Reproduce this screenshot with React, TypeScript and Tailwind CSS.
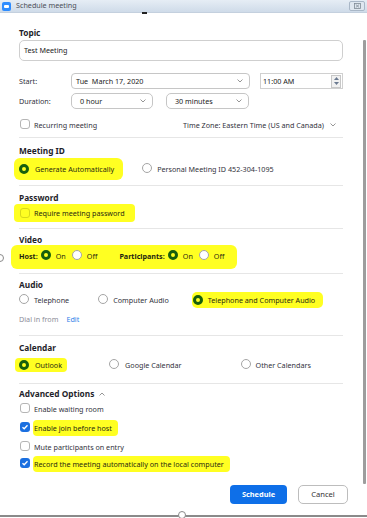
import React from "react";

const Radio = ({ on }: { on?: boolean }) =>
  on ? (
    <span className="inline-block w-[10px] h-[10px] rounded-full border-[3px] border-[#175f0d] shrink-0" />
  ) : (
    <span className="inline-block w-[10px] h-[10px] rounded-full border border-[#a5a5a5] bg-white shrink-0" />
  );

const Check = ({ on }: { on?: boolean }) =>
  on ? (
    <span className="inline-flex items-center justify-center w-[10px] h-[10px] rounded-[3px] bg-[#1a6fe0] shrink-0">
      <svg width="8" height="8" viewBox="0 0 8 8">
        <path d="M1.5 4.2 L3.2 5.8 L6.5 2.2" fill="none" stroke="white" strokeWidth="1.3" />
      </svg>
    </span>
  ) : (
    <span className="inline-block w-[10px] h-[10px] rounded-[3px] border border-[#b5b5b5] bg-white shrink-0" />
  );

const Chevron = ({ up }: { up?: boolean }) => (
  <svg width="6" height="4" viewBox="0 0 6 4" className="shrink-0">
    <path d={up ? "M0.5 3.5 L3 1 L5.5 3.5" : "M0.5 0.5 L3 3 L5.5 0.5"} fill="none" stroke="#8a8a8a" strokeWidth="0.9" />
  </svg>
);

const Label = ({ children }: { children: React.ReactNode }) => (
  <div className="h-[12px] leading-[12px] text-[8.3px] font-bold text-[#1f1f2b]">{children}</div>
);

const Divider = ({ mt }: { mt: string }) => <div className={`${mt} h-px w-[324px] bg-[#e6e6e6]`} />;

export default function App() {
  return (
    <div className="relative w-[367px] h-[518px] bg-white overflow-hidden font-[family-name:'Noto_Sans',sans-serif] text-[#32323c]">
      {/* title bar */}
      <div className="h-[13px] flex items-center bg-gradient-to-b from-[#e6edf5] to-[#cfdbe9] border-b border-[#c4d0de]">
        <span className="ml-[2px] w-[9px] h-[9px] rounded-[2px] bg-[#2d8cff] flex items-center justify-center">
          <span className="w-[5px] h-[3px] bg-white rounded-[1px]" />
        </span>
        <span className="ml-[5px] text-[7.2px] text-[#4b4f57] leading-none">Schedule meeting</span>
        <span className="ml-auto mr-[2px] w-[16px] h-[10px] rounded-[2px] border border-[#a9b7c7] bg-[#dfe7f0] flex items-center justify-center">
          <svg width="7" height="6" viewBox="0 0 7 6">
            <rect x="0.5" y="0.5" width="6" height="5" fill="none" stroke="#7f8a96" strokeWidth="0.8" />
            <path d="M1.8 1.5 L5.2 4.5 M5.2 1.5 L1.8 4.5" stroke="#7f8a96" strokeWidth="0.8" />
          </svg>
        </span>
      </div>
      {/* stray dash */}
      <div className="absolute left-[142px] top-[12px] w-[5px] h-[2px] bg-[#222]" />
      {/* scrollbar */}
      <div className="absolute left-[363px] top-[40px] w-[3px] h-[444px] bg-[#9d9d9d] rounded-[1px]" />
      {/* bottom frame */}
      <div className="absolute left-0 top-[515px] w-[367px] h-[2px] bg-[#8a8a8a]" />
      <div className="absolute left-[178px] top-[511px] w-[8px] h-[8px] rounded-full border border-[#8a8a8a] bg-white" />
      <div className="absolute left-[-4px] top-[254px] w-[8px] h-[8px] rounded-full border border-[#8a8a8a] bg-white" />

      <div className="pl-[19px]">
        <div className="mt-[14px]">
          <Label>Topic</Label>
        </div>
        <div className="mt-px w-[324px] h-[21px] rounded-[5px] border border-[#cfcfcf] flex items-center pl-[4px] text-[7.2px] text-[#222]">
          Test Meeting
        </div>

        {/* Start */}
        <div className="mt-[12px] h-[16px] flex items-center text-[7.2px]">
          <span className="w-[52px]">Start:</span>
          <div className="w-[179px] h-[16px] rounded-[4px] border border-[#c6c6c6] flex items-center pl-[4px] pr-[6px] text-[#222]">
            <span>Tue&nbsp; March 17, 2020</span>
            <span className="ml-auto">
              <Chevron />
            </span>
          </div>
          <div className="ml-[10px] w-[83px] h-[16px] border border-[#d0d0d0] flex items-center pl-[2px] text-[#222]">
            <span>11:00 AM</span>
            <span className="ml-auto mr-px w-[10px] h-[13px] border border-[#c7c7c7] bg-[#f1f1f1] flex flex-col items-center justify-center gap-[2px]">
              <svg width="5" height="3" viewBox="0 0 5 3"><path d="M0 3 L2.5 0 L5 3Z" fill="#6b7a90" /></svg>
              <svg width="5" height="3" viewBox="0 0 5 3"><path d="M0 0 L2.5 3 L5 0Z" fill="#6b7a90" /></svg>
            </span>
          </div>
        </div>

        {/* Duration */}
        <div className="mt-[4px] h-[16px] flex items-center text-[7.2px]">
          <span className="w-[52px]">Duration:</span>
          <div className="w-[82px] h-[16px] rounded-[5px] border border-[#c6c6c6] flex items-center pl-[8px] pr-[6px] text-[#222]">
            <span>0 hour</span>
            <span className="ml-auto"><Chevron /></span>
          </div>
          <div className="ml-[13px] w-[83px] h-[16px] rounded-[5px] border border-[#c6c6c6] flex items-center pl-[8px] pr-[6px] text-[#222]">
            <span>30 minutes</span>
            <span className="ml-auto"><Chevron /></span>
          </div>
        </div>

        {/* Recurring */}
        <div className="mt-[11px] h-[10px] flex items-center text-[7.2px] w-[324px]">
          <span className="ml-px"><Check /></span>
          <span className="ml-[4px]">Recurring meeting</span>
          <span className="ml-[86px]">Time Zone: Eastern Time (US and Canada)</span>
          <span className="ml-[6px]"><Chevron /></span>
        </div>

        <Divider mt="mt-[7px]" />

        {/* Meeting ID */}
        <div className="mt-[7px]"><Label>Meeting ID</Label></div>
        <div className="mt-[6px] h-[12px] flex items-center text-[7.2px]">
          <span className="flex items-center bg-[#ffff22] rounded-[6px] pl-[5px] pr-[9px] py-[6px] -ml-[5px] -mr-[9px] -my-[6px]">
            <Radio on />
            <span className="ml-[6px] text-[#2a2a10]">Generate Automatically</span>
          </span>
          <span className="ml-[28px]"><Radio /></span>
          <span className="ml-[5px]">Personal Meeting ID 452-304-1095</span>
        </div>

        <Divider mt="mt-[10px]" />

        {/* Password */}
        <div className="mt-[6px]"><Label>Password</Label></div>
        <div className="mt-[3px] h-[12px] flex items-center text-[7.2px]">
          <span className="flex items-center bg-[#ffff22] rounded-[4px] pl-[5px] pr-[10px] py-[4px] -ml-[5px] -my-[4px]">
            <span className="ml-px inline-block w-[10px] h-[10px] rounded-[3px] border border-[#d8d81a] shrink-0" />
            <span className="ml-[4px] text-[#2a2a10]">Require meeting password</span>
          </span>
        </div>

        <Divider mt="mt-[9px]" />

        {/* Video */}
        <div className="mt-[5px]"><Label>Video</Label></div>
        <div className="mt-[4px] h-[12px] flex items-center text-[7.2px]">
          <span className="flex items-center bg-[#ffff22] rounded-[6px] pl-[8px] pr-[13px] pt-[5px] pb-[7px] -ml-[8px] -mt-[5px] -mb-[7px] text-[#2a2a10]">
            <span className="font-bold text-[#1f1f10]">Host:</span>
            <span className="ml-[3px]"><Radio on /></span>
            <span className="ml-[5px]">On</span>
            <span className="ml-[6px]"><Radio /></span>
            <span className="ml-[5px]">Off</span>
            <span className="ml-[22px] font-bold text-[#1f1f10]">Participants:</span>
            <span className="ml-[3px]"><Radio on /></span>
            <span className="ml-[5px]">On</span>
            <span className="ml-[6px]"><Radio /></span>
            <span className="ml-[5px]">Off</span>
          </span>
        </div>

        <Divider mt="mt-[11px]" />

        {/* Audio */}
        <div className="mt-[5px]"><Label>Audio</Label></div>
        <div className="mt-[3px] h-[12px] flex items-center text-[7.2px]">
          <span className="ml-[0px]"><Radio /></span>
          <span className="ml-[5px]">Telephone</span>
          <span className="ml-[29px]"><Radio /></span>
          <span className="ml-[5px]">Computer Audio</span>
          <span className="ml-[23px] flex items-center bg-[#ffff22] rounded-[5px] pl-[1px] pr-[8px] py-[3px] -ml-[1px] -my-[3px]">
            <Radio on />
            <span className="ml-[5px] text-[#2a2a10]">Telephone and Computer Audio</span>
          </span>
        </div>
        <div className="mt-[7px] h-[12px] flex items-center text-[7.2px]">
          <span className="text-[#8d8d99]">Dial in from</span>
          <span className="ml-[8px] text-[#2d7ee8]">Edit</span>
        </div>

        <Divider mt="mt-[10px]" />

        {/* Calendar */}
        <div className="mt-[6px]"><Label>Calendar</Label></div>
        <div className="mt-[5px] h-[12px] flex items-center text-[7.2px]">
          <span className="flex items-center bg-[#ffff22] rounded-[4px] pl-[4px] pr-[5px] py-[2px] -ml-[4px] -my-[2px]">
            <Radio on />
            <span className="ml-[6px] text-[#2a2a10]">Outlook</span>
          </span>
          <span className="ml-[42px]"><Radio /></span>
          <span className="ml-[6px]">Google Calendar</span>
          <span className="ml-[59px]"><Radio /></span>
          <span className="ml-[5px]">Other Calendars</span>
        </div>

        <Divider mt="mt-[12px]" />

        {/* Advanced */}
        <div className="mt-[4px] flex items-center gap-[5px]">
          <Label>Advanced Options</Label>
          <Chevron up />
        </div>
        <div className="mt-[3px] h-[12px] flex items-center text-[7.2px]">
          <span className="ml-px"><Check /></span>
          <span className="ml-[4px]">Enable waiting room</span>
        </div>
        <div className="mt-[7px] h-[12px] flex items-center text-[7.2px]">
          <span className="ml-px"><Check on /></span>
          <span className="ml-[3px] bg-[#ffff22] rounded-[4px] pl-px pr-[6px] py-[3px] -my-[3px] text-[#2a2a10]">Enable join before host</span>
        </div>
        <div className="mt-[7px] h-[12px] flex items-center text-[7.2px]">
          <span className="ml-px"><Check /></span>
          <span className="ml-[4px]">Mute participants on entry</span>
        </div>
        <div className="mt-[5px] h-[12px] flex items-center text-[7.2px]">
          <span className="ml-px"><Check on /></span>
          <span className="ml-[3px] bg-[#ffff22] rounded-[4px] pl-px pr-[6px] py-[3px] -my-[3px] text-[#2a2a10]">Record the meeting automatically on the local computer</span>
        </div>

        {/* Buttons */}
        <div className="mt-[15px] w-[329px] flex justify-end gap-[11px]">
          <button className="w-[57px] h-[19px] rounded-[4px] bg-[#0e6fe8] text-white text-[7.4px] font-bold">Schedule</button>
          <button className="w-[50px] h-[19px] rounded-[5px] border border-[#bdbdbd] bg-white text-[#333] text-[7.6px]">Cancel</button>
        </div>
      </div>
    </div>
  );
}
